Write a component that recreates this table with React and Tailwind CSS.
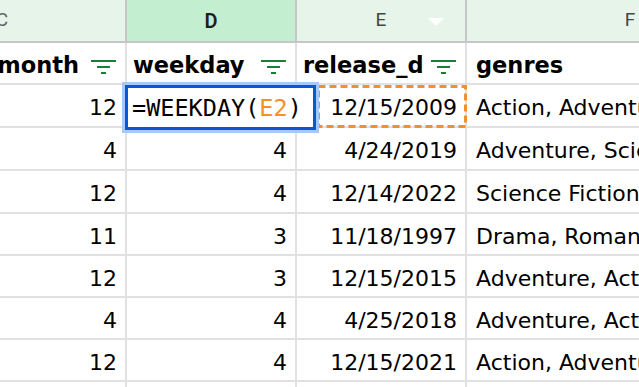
const rows = [
  ["12", "", "12/15/2009", "Action, Adventure, Fantasy"],
  ["4", "4", "4/24/2019", "Adventure, Science Fiction"],
  ["12", "4", "12/14/2022", "Science Fiction, Adventure"],
  ["11", "3", "11/18/1997", "Drama, Romance"],
  ["12", "3", "12/15/2015", "Adventure, Action"],
  ["4", "4", "4/25/2018", "Adventure, Action"],
  ["12", "4", "12/15/2021", "Action, Adventure"],
  ["", "", "", ""],
];

const heights = ["h-[43px]", "h-[43px]", "h-[43px]", "h-[42px]", "h-[42px]", "h-[42px]", "h-[42px]", "h-[43px]"];

function FilterIcon() {
  return (
    <svg width="25" height="16" viewBox="0 0 25 16" className="shrink-0 mt-[3px]">
      <rect x="0" y="0" width="25" height="2" fill="#188038" />
      <rect x="6" y="6" width="13" height="2" fill="#188038" />
      <rect x="10" y="12" width="5" height="2" fill="#188038" />
    </svg>
  );
}

const cols = "grid grid-cols-[248px_170px_170px_326px]";

export default function App() {
  return (
    <div
      className="w-[639px] h-[387px] overflow-hidden bg-white text-black"
      style={{ fontFamily: "'DejaVu Sans', sans-serif" }}
    >
      <div className="ml-[-121px] w-[914px]">
        {/* column letters */}
        <div
          className={`${cols} h-[43px] text-[19px]`}
          style={{ fontFamily: "Roboto, sans-serif" }}
        >
          <div className="bg-[#e6f4ea] border-r-2 border-b-2 border-[#c4c7c5] flex items-center justify-center text-[#5f6368]">C</div>
          <div className="bg-[#c4eed0] border-r-2 border-b-2 border-[#c4c7c5] flex items-center justify-center text-[#1f1f1f] font-semibold text-[20px]">D</div>
          <div className="bg-[#e6f4ea] border-r-2 border-b-2 border-[#c4c7c5] flex items-center justify-center text-[#444746] relative">
            E
            <svg width="16" height="8" viewBox="0 0 16 8" className="absolute right-[21px] top-[18px]">
              <polygon points="0,0 16,0 8,8" fill="#ffffff" />
            </svg>
          </div>
          <div className="bg-[#e6f4ea] border-b-2 border-[#c4c7c5] flex items-center justify-center text-[#444746]">F</div>
        </div>

        {/* header row */}
        <div className={`${cols} h-[42px] text-[22.5px] font-bold`}>
          <div className="border-r-2 border-b-2 border-[#e1e1e1] flex items-center justify-end pt-[6px] pr-[9px] gap-[12px]">
            <span className="whitespace-nowrap">month</span>
            <FilterIcon />
          </div>
          <div className="border-r-2 border-b-2 border-[#e1e1e1] flex items-center pt-[6px] pl-[6px] pr-[9px] gap-2">
            <span className="flex-1 min-w-0 overflow-hidden whitespace-nowrap">weekday</span>
            <FilterIcon />
          </div>
          <div className="border-r-2 border-b-2 border-[#e1e1e1] flex items-center pt-[6px] pl-[6px] pr-[9px] gap-[8px]">
            <span className="flex-1 min-w-0 overflow-hidden whitespace-nowrap">release_date</span>
            <FilterIcon />
          </div>
          <div className="border-b-2 border-[#e1e1e1] flex items-center pt-[6px] pl-[9px]">
            <span className="whitespace-nowrap">genres</span>
          </div>
        </div>

        {/* data rows */}
        {rows.map((r, i) => (
          <div key={i} className={`${cols} ${heights[i]} text-[22px]`}>
            <div className="border-r-2 border-b-2 border-[#e1e1e1] flex items-center justify-end pt-[4px] pr-[8px]">{r[0]}</div>
            {i === 0 ? (
              <div className="relative border-r-2 border-b-2 border-[#e1e1e1]">
                <div className="absolute left-[-5px] top-[-3px] w-[197px] h-[51px] border-[3px] border-[#a8c7fa] z-10">
                  <div
                    className="w-full h-full border-[3px] border-[#0b57d0] bg-white flex items-center pt-[3px] pl-[4px] whitespace-nowrap text-[23.5px]"
                    style={{ fontFamily: "'DejaVu Sans Mono', monospace" }}
                  >
                    =WEEKDAY(<span className="text-[#f4902c]">E2</span>)
                  </div>
                </div>
              </div>
            ) : (
              <div className="border-r-2 border-b-2 border-[#e1e1e1] flex items-center justify-end pt-[4px] pr-[8px]">{r[1]}</div>
            )}
            <div className="relative border-r-2 border-b-2 border-[#e1e1e1] flex items-center justify-end pt-[4px] pr-[8px]">
              {i === 0 && (
                <svg className="absolute left-[20px] top-0 w-[150px] h-[43px]" viewBox="0 0 150 43">
                  <rect x="1.5" y="1.5" width="147" height="40" fill="none" stroke="#f4902c" strokeWidth="3" strokeDasharray="7 4" />
                </svg>
              )}
              {r[2]}
            </div>
            <div className="border-b-2 border-[#e1e1e1] flex items-center pt-[4px] pl-[9px] whitespace-nowrap overflow-hidden">{r[3]}</div>
          </div>
        ))}
      </div>
    </div>
  );
}
